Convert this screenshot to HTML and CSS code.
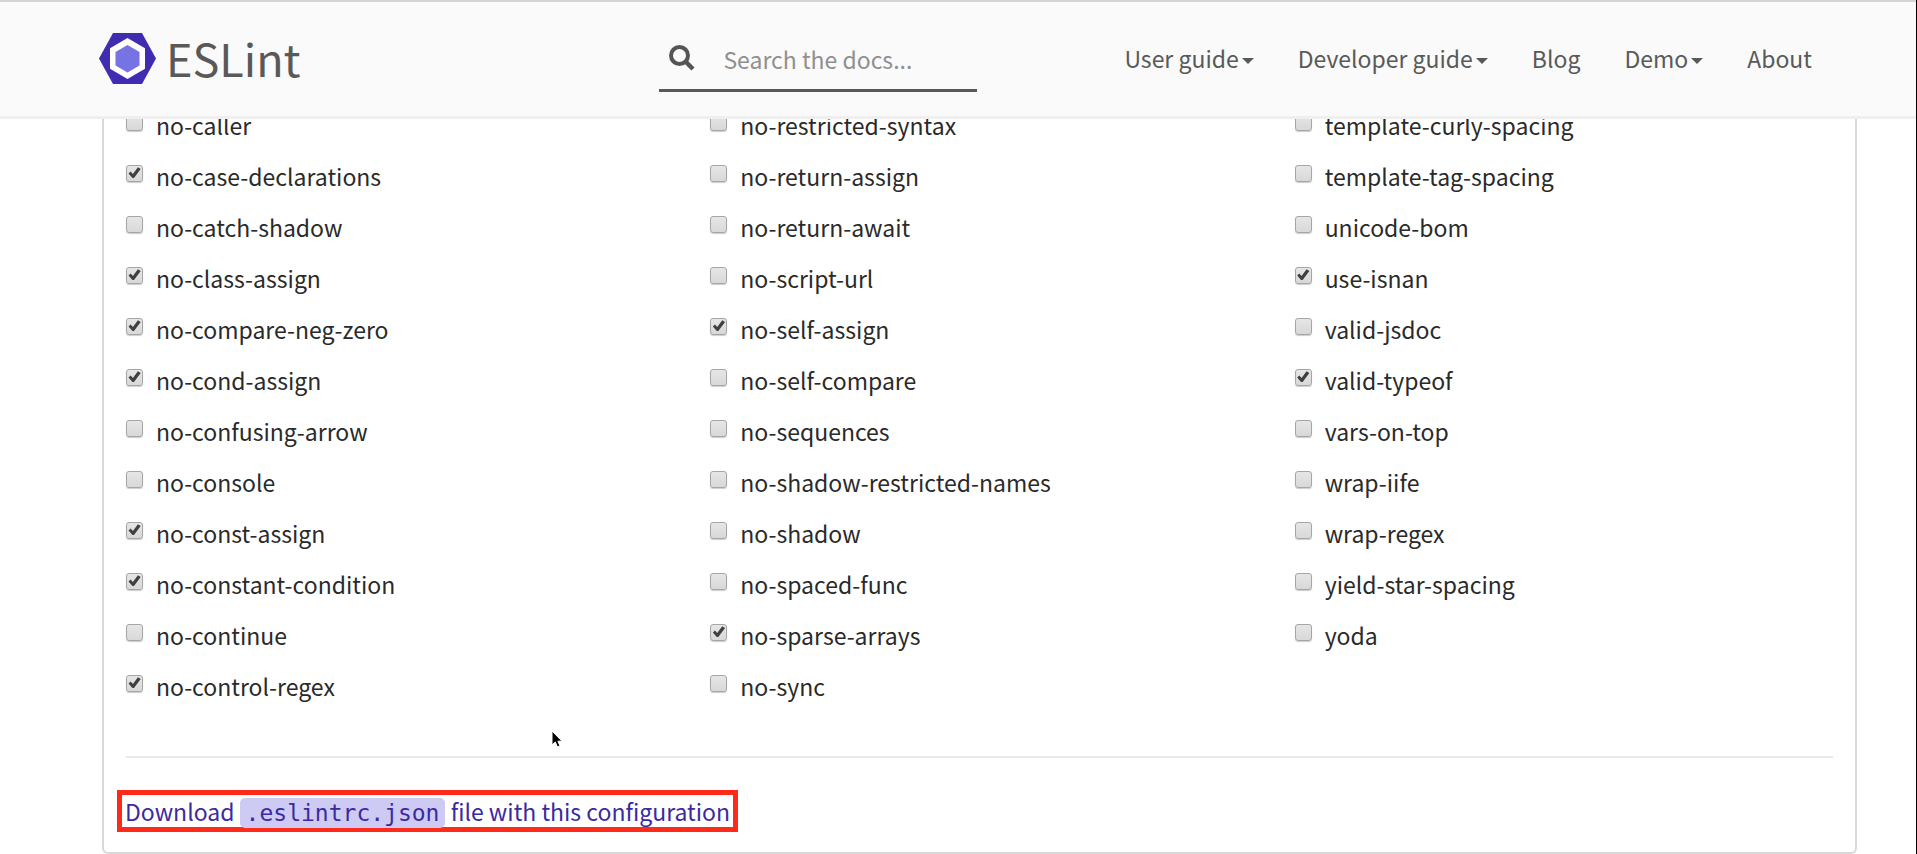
FILE: index.html
```html
<!DOCTYPE html>
<html lang="en">
<head>
<meta charset="utf-8">
<title>ESLint</title>
<link rel="stylesheet" href="styles.css">
</head>
<body>
<header class="header">
  <a class="brand" href="#">
    <svg class="brand-mark" viewBox="0 0 57 51" aria-hidden="true">
      <path fill="#3f2cb0" d="M14 0h29l14 25.500-14 25.500H14L0 25.500z"/>
      <path fill="#fff" d="M28.500 5 46 15.200v20.600L28.500 46 11 35.800V15.200z"/>
      <path fill="#7673e4" d="M28.500 12 40.500 19v13.500L28.500 39.500 16.500 32.500V19z"/>
    </svg>
    <span class="brand-name">ESLint</span>
  </a>
  <form class="search" role="search">
    <svg class="search-icon" viewBox="0 0 26 26" aria-hidden="true">
      <circle cx="10.500" cy="10.500" r="8.500" fill="none" stroke="#555" stroke-width="4"/>
      <path d="M16.500 16.500 24 24" stroke="#555" stroke-width="4.500"/>
    </svg>
    <input class="search-input" type="search" aria-label="Search the docs" placeholder="Search the docs...">
  </form>
  <nav class="nav">
    <button class="nav-item" type="button">User guide<span class="caret"></span></button>
    <button class="nav-item" type="button">Developer guide<span class="caret"></span></button>
    <a class="nav-item" href="#">Blog</a>
    <button class="nav-item" type="button">Demo<span class="caret"></span></button>
    <a class="nav-item" href="#">About</a>
  </nav>
</header>
<main class="panel">
  <div class="rules">
    <div class="column">
      <label class="rule"><input type="checkbox">no-caller</label>
      <label class="rule"><input type="checkbox" checked>no-case-declarations</label>
      <label class="rule"><input type="checkbox">no-catch-shadow</label>
      <label class="rule"><input type="checkbox" checked>no-class-assign</label>
      <label class="rule"><input type="checkbox" checked>no-compare-neg-zero</label>
      <label class="rule"><input type="checkbox" checked>no-cond-assign</label>
      <label class="rule"><input type="checkbox">no-confusing-arrow</label>
      <label class="rule"><input type="checkbox">no-console</label>
      <label class="rule"><input type="checkbox" checked>no-const-assign</label>
      <label class="rule"><input type="checkbox" checked>no-constant-condition</label>
      <label class="rule"><input type="checkbox">no-continue</label>
      <label class="rule"><input type="checkbox" checked>no-control-regex</label>
    </div>
    <div class="column">
      <label class="rule"><input type="checkbox">no-restricted-syntax</label>
      <label class="rule"><input type="checkbox">no-return-assign</label>
      <label class="rule"><input type="checkbox">no-return-await</label>
      <label class="rule"><input type="checkbox">no-script-url</label>
      <label class="rule"><input type="checkbox" checked>no-self-assign</label>
      <label class="rule"><input type="checkbox">no-self-compare</label>
      <label class="rule"><input type="checkbox">no-sequences</label>
      <label class="rule"><input type="checkbox">no-shadow-restricted-names</label>
      <label class="rule"><input type="checkbox">no-shadow</label>
      <label class="rule"><input type="checkbox">no-spaced-func</label>
      <label class="rule"><input type="checkbox" checked>no-sparse-arrays</label>
      <label class="rule"><input type="checkbox">no-sync</label>
    </div>
    <div class="column">
      <label class="rule"><input type="checkbox">template-curly-spacing</label>
      <label class="rule"><input type="checkbox">template-tag-spacing</label>
      <label class="rule"><input type="checkbox">unicode-bom</label>
      <label class="rule"><input type="checkbox" checked>use-isnan</label>
      <label class="rule"><input type="checkbox">valid-jsdoc</label>
      <label class="rule"><input type="checkbox" checked>valid-typeof</label>
      <label class="rule"><input type="checkbox">vars-on-top</label>
      <label class="rule"><input type="checkbox">wrap-iife</label>
      <label class="rule"><input type="checkbox">wrap-regex</label>
      <label class="rule"><input type="checkbox">yield-star-spacing</label>
      <label class="rule"><input type="checkbox">yoda</label>
    </div>
  </div>
  <hr class="divider">
  <a class="download" href="#">Download <code class="file">.eslintrc.json</code> file with this configuration</a>
</main>
<svg class="pointer" viewBox="0 0 12 18" aria-hidden="true">
  <path d="M1 1v14l3.300-3 2.200 5 2.500-1-2.100-4.800H11z" fill="#000" stroke="#fff" stroke-width="1"/>
</svg>
</body>
</html>
```

FILE: styles.css
```css
* {
  box-sizing: border-box;
}

html {
  min-height: 100%;
  border-right: 1px solid #000;
  background: #fff;
}

body {
  margin: 0;
  font-family: "Noto Sans CJK JP", "Noto Sans", sans-serif;
  font-size: 23px;
  color: #2a2a2a;
}

.header {
  position: sticky;
  top: 0;
  z-index: 1;
  display: flex;
  align-items: center;
  height: 119px;
  padding: 0 104px 2px 99px;
  border-top: 2px solid #d4d4d4;
  border-bottom: 3px solid #efefef;
  background: #fafafa;
  color: #595959;
}

.brand {
  display: flex;
  align-items: center;
  gap: 10px;
  flex: 1;
  color: inherit;
  text-decoration: none;
}

.brand-mark {
  width: 57px;
  height: 51px;
}

.brand-name {
  font-size: 45px;
  line-height: 48px;
}

.search {
  display: flex;
  align-items: center;
  gap: 28px;
  width: 318px;
  height: 68px;
  padding: 2px 10px 0;
  border-bottom: 3px solid #595959;
}

.search-icon {
  flex: none;
  width: 26px;
  height: 26px;
}

.search-input {
  flex: 1;
  min-width: 0;
  padding: 3px 0 0;
  border: 0;
  outline: 0;
  background: none;
  font: inherit;
  line-height: 32px;
}

.search-input::placeholder {
  color: #8f8f8f;
}

.nav {
  display: flex;
  justify-content: flex-end;
  gap: 44px;
  margin-left: 147px;
}

.nav-item {
  display: flex;
  align-items: center;
  gap: 3px;
  padding: 0;
  border: 0;
  background: none;
  font: inherit;
  line-height: 32px;
  color: inherit;
  text-decoration: none;
  white-space: nowrap;
}

.caret {
  margin-top: 6px;
  border: 6px solid transparent;
  border-top-color: currentColor;
  border-bottom: 0;
}

.panel {
  margin: -19px 59px 0 102px;
  padding: 0 22px 20px;
  border: 2px solid #d9d9d9;
  border-top: 0;
  border-radius: 0 0 6px 6px;
}

.rules {
  display: grid;
  grid-template-columns: repeat(3, 1fr);
  column-gap: 23px;
  margin-right: -23px;
}

.column {
  display: flex;
  flex-direction: column;
}

.rule {
  display: flex;
  align-items: center;
  gap: 13px;
  line-height: 51px;
}

.rule input {
  appearance: none;
  width: 17px;
  height: 17px;
  margin: 0 0 7px;
  border: 1px solid #a6a6a6;
  border-radius: 3px;
  background: linear-gradient(#e6e6e6, #d8d8d8);
  box-shadow: 0 1px 1px #ccc;
}

.rule input:checked::before {
  content: "";
  display: block;
  width: 13px;
  height: 12px;
  margin: 1px;
  background: #404040;
  clip-path: polygon(4% 58%, 20% 42%, 38% 62%, 76% 6%, 98% 20%, 46% 96%, 34% 96%);
}

.divider {
  margin: 44px 0 32px;
  border: 0;
  border-top: 2px solid #eaeaea;
}

.download {
  display: block;
  width: fit-content;
  margin-left: -9px;
  padding: 0 3px;
  border: 5px solid #ff2a1a;
  line-height: 32px;
  color: #3c2aa0;
  text-decoration: none;
}

.file {
  padding: 2px 6px;
  border-radius: 5px;
  background: #cdcbf3;
  font-family: "DejaVu Sans Mono", monospace;
  font-size: 23px;
  line-height: 24px;
}

.pointer {
  position: absolute;
  top: 730px;
  left: 551px;
  width: 12px;
  height: 18px;
}
```
